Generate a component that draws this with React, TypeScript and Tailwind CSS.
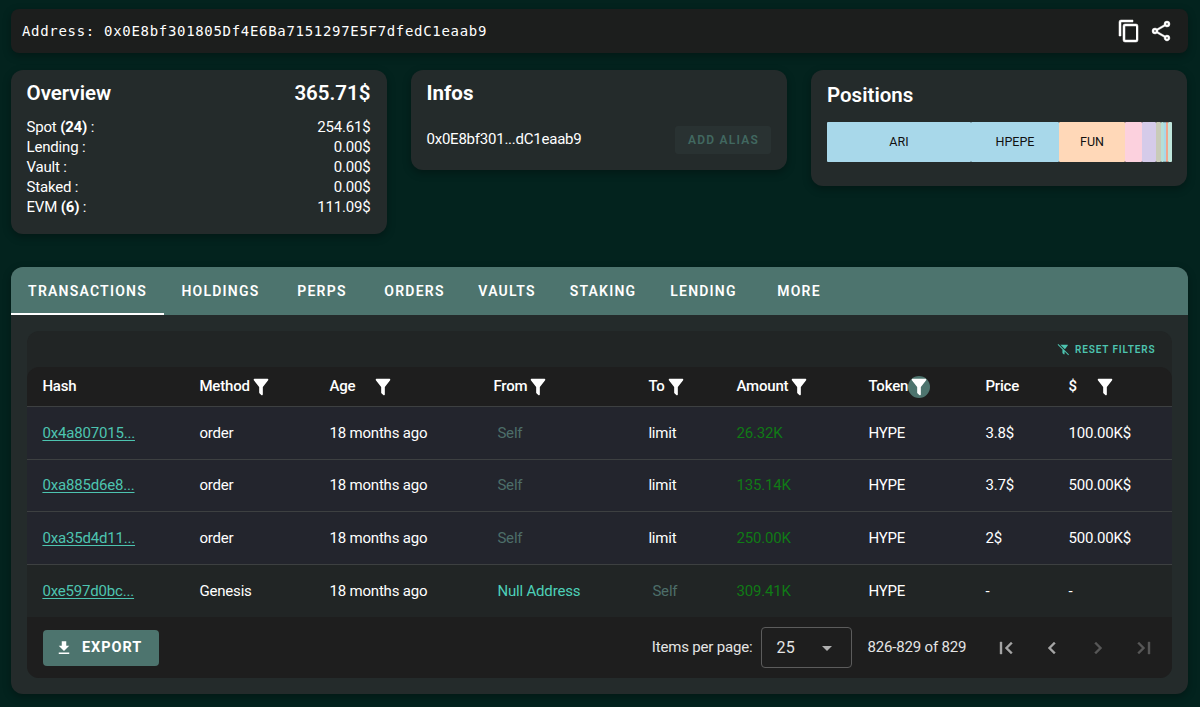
import React from "react";

const FILTER =
  "M14,12V19.88C14.04,20.18 13.94,20.5 13.71,20.71C13.32,21.1 12.69,21.1 12.3,20.71L10.29,18.7C10.06,18.47 9.96,18.16 10,17.87V12H9.97L4.21,4.62C3.87,4.19 3.95,3.56 4.38,3.22C4.57,3.08 4.78,3 5,3V3H19V3C19.22,3 19.43,3.08 19.62,3.22C20.05,3.56 20.13,4.19 19.79,4.62L14.03,12H14Z";
const FILTER_OFF =
  "M2.39,1.73L1.11,3L10,11.89V17.87C9.96,18.16 10.06,18.47 10.29,18.7L12.3,20.71C12.69,21.1 13.32,21.1 13.71,20.71C13.94,20.5 14.04,20.18 14,19.88V15.89L20.84,22.73L22.11,21.46L2.39,1.73M19.79,4.62C20.13,4.19 20.05,3.56 19.62,3.22C19.43,3.08 19.22,3 19,3H6.2L14.6,11.4L19.79,4.62Z";
const COPY =
  "M19,21H8V7H19M19,5H8A2,2 0 0,0 6,7V21A2,2 0 0,0 8,23H19A2,2 0 0,0 21,21V7A2,2 0 0,0 19,5M16,1H4A2,2 0 0,0 2,3V17H4V3H16V1Z";
const SHARE =
  "M18,16.08C17.24,16.08 16.56,16.38 16.04,16.85L8.91,12.7C8.96,12.47 9,12.24 9,12C9,11.76 8.96,11.53 8.91,11.3L15.96,7.19C16.5,7.69 17.21,8 18,8A3,3 0 0,0 21,5A3,3 0 0,0 18,2A3,3 0 0,0 15,5C15,5.24 15.04,5.47 15.09,5.7L8.04,9.81C7.5,9.31 6.79,9 6,9A3,3 0 0,0 3,12A3,3 0 0,0 6,15C6.79,15 7.5,14.69 8.04,14.19L15.16,18.34C15.11,18.55 15.08,18.77 15.08,19C15.08,20.61 16.39,21.91 18,21.91C19.61,21.91 20.92,20.61 20.92,19A2.92,2.92 0 0,0 18,16.08M18,4A1,1 0 0,1 19,5A1,1 0 0,1 18,6A1,1 0 0,1 17,5A1,1 0 0,1 18,4M6,13A1,1 0 0,1 5,12A1,1 0 0,1 6,11A1,1 0 0,1 7,12A1,1 0 0,1 6,13M18,20A1,1 0 0,1 17,19A1,1 0 0,1 18,18A1,1 0 0,1 19,19A1,1 0 0,1 18,20Z";
const DOWNLOAD = "M5,20H19V18H5M19,9H15V3H9V9H5L12,16L19,9Z";
const FIRST =
  "M18.41,16.59L13.82,12L18.41,7.41L17,6L11,12L17,18L18.41,16.59M6,6H8V18H6V6Z";
const PREV = "M15.41,16.58L10.83,12L15.41,7.41L14,6L8,12L14,18L15.41,16.58Z";
const NEXT = "M8.59,16.58L13.17,12L8.59,7.41L10,6L16,12L10,18L8.59,16.58Z";
const LAST =
  "M5.59,7.41L10.18,12L5.59,16.59L7,18L13,12L7,6L5.59,7.41M16,6H18V18H16V6Z";
const DOWN = "M7,10L12,15L17,10H7Z";

function Icon({ d, className }: { d: string; className: string }) {
  return (
    <svg viewBox="0 0 24 24" fill="currentColor" className={"shrink-0 " + className}>
      <path d={d} />
    </svg>
  );
}

const overview: [string, string, string][] = [
  ["Spot ", "(24)", "254.61$"],
  ["Lending", "", "0.00$"],
  ["Vault", "", "0.00$"],
  ["Staked", "", "0.00$"],
  ["EVM ", "(6)", "111.09$"],
];

const segments = [
  { label: "ARI", cls: "w-[144px] bg-[#a8d8ea]" },
  { label: "HPEPE", cls: "w-[88px] bg-[#a8d8ea]" },
  { label: "FUN", cls: "w-[66px] bg-[#ffd8b8]" },
  { label: "", cls: "w-[17px] bg-[#fcd1de]" },
  { label: "", cls: "w-[14px] bg-[#d5cbe9]" },
  { label: "", cls: "w-[5px] bg-[#c9cbb8]" },
  { label: "", cls: "w-[3px] bg-[#b5dfd8]" },
  { label: "", cls: "w-[2px] bg-[#a8d8ea]" },
  { label: "", cls: "w-[2px] bg-[#f0a58c]" },
  { label: "", cls: "w-[4px] bg-[#bfe6dc]" },
];

const tabs = [
  { label: "TRANSACTIONS", cls: "w-[153px] border-b-2 border-white pt-[2px]" },
  { label: "HOLDINGS", cls: "w-[113px]" },
  { label: "PERPS", cls: "w-[90px]" },
  { label: "ORDERS", cls: "w-[95px]" },
  { label: "VAULTS", cls: "w-[90px]" },
  { label: "STAKING", cls: "w-[102px]" },
  { label: "LENDING", cls: "w-[99px]" },
  { label: "MORE", cls: "w-[92px]" },
];

const heads = [
  { label: "Hash", filter: false, cls: "pb-px" },
  { label: "Method", filter: true, cls: "" },
  { label: "Age", filter: true, cls: "gap-[17px]" },
  { label: "From", filter: true, cls: "" },
  { label: "To", filter: true, cls: "" },
  { label: "Amount", filter: true, cls: "" },
  { label: "Token", filter: true, cls: "" },
  { label: "Price", filter: false, cls: "" },
  { label: "$", filter: true, cls: "gap-[17px]" },
];

const rows = [
  ["0x4a807015...", "order", "Self", "limit", "26.32K", "3.8$", "100.00K$"],
  ["0xa885d6e8...", "order", "Self", "limit", "135.14K", "3.7$", "500.00K$"],
  ["0xa35d4d11...", "order", "Self", "limit", "250.00K", "2$", "500.00K$"],
  ["0xe597d0bc...", "Genesis", "Null Address", "Self", "309.41K", "-", "-"],
];

const grid =
  "grid grid-cols-[157px_130px_164px_155px_88px_132px_117px_83px_1fr] items-center pl-[15.4px]";
const card = "rounded-xl bg-[#242b2b] shadow-[0_3px_8px_rgba(0,0,0,0.3)]";

export default function App() {
  return (
    <div className="h-[707px] w-[1200px] overflow-hidden bg-[#03231e] pl-[11px] pr-[12.5px] pt-[9px] font-['Roboto',sans-serif] text-[15px] tracking-[-0.18px] text-white">
      <header className="flex h-[44px] items-center rounded-lg bg-[#1c1e1d] pl-[11px] pr-[15px] shadow-[0_3px_8px_rgba(0,0,0,0.3)]">
        <span className="font-['DejaVu_Sans_Mono',monospace] text-[14px] tracking-[0.69px]">
          Address: 0x0E8bf301805Df4E6Ba7151297E5F7dfedC1eaab9
        </span>
        <Icon d={COPY} className="ml-auto size-6 stroke-white stroke-[0.5]" />
        <Icon d={SHARE} className="ml-2 size-6 stroke-white stroke-[0.4]" />
      </header>

      <div className="mt-[17px] flex items-start gap-6">
        <section className={"h-[164px] w-[376px] pl-[15.5px] pr-[16.5px] pt-[11px] " + card}>
          <div className="flex h-6 items-center justify-between text-[20.5px] font-semibold tracking-normal">
            <h2>Overview</h2>
            <span>365.71$</span>
          </div>
          <div className="mt-[12px]">
            {overview.map(([a, b, v]) => (
              <div key={a} className="flex h-5 items-center justify-between">
                <span className="whitespace-pre">
                  {a}
                  <b>{b}</b> :
                </span>
                <span>{v}</span>
              </div>
            ))}
          </div>
        </section>

        <section className={"h-[100px] w-[376px] pl-[15.5px] pr-4 pt-[11px] " + card}>
          <h2 className="h-6 text-[20.5px] leading-6 font-bold tracking-normal">Infos</h2>
          <div className="mt-[21px] flex h-7 items-center justify-between">
            <span className="pb-0.5 tracking-[-0.23px]">0x0E8bf301...dC1eaab9</span>
            <button className="h-7 w-24 rounded-[3px] bg-[#293232] pl-px text-[12px] font-semibold tracking-[1.2px] text-[#416860]">
              ADD ALIAS
            </button>
          </div>
        </section>

        <section className={"h-[116px] w-[376px] px-4 pt-[13px] " + card}>
          <h2 className="h-6 text-[20.5px] leading-6 font-semibold tracking-normal">Positions</h2>
          <div className="mt-[15px] flex h-10 w-[345px] text-[12.5px] tracking-normal text-[#111]">
            {segments.map((s, i) => (
              <div key={i} className={"flex items-center justify-center rounded-[1px] " + s.cls}>
                {s.label}
              </div>
            ))}
          </div>
        </section>
      </div>

      <main className={"mt-[33px] h-[427px] overflow-hidden " + card}>
        <nav className="flex h-12 bg-[#4d746e] text-[14px] font-semibold tracking-[1.22px]">
          {tabs.map((t) => (
            <button key={t.label} className={"flex items-center justify-center " + t.cls}>
              {t.label}
            </button>
          ))}
        </nav>

        <div className="mx-4 mt-4 h-[347px] overflow-hidden rounded-xl bg-[#212525]">
          <div className="flex h-9 items-center justify-end gap-[5px] pr-[16px] text-[10px] font-semibold tracking-[0.88px] text-[#4dc4b0]">
            <Icon d={FILTER_OFF} className="size-[13px]" />
            RESET FILTERS
          </div>

          <div className={"h-[39px] rounded-t-xl bg-[#1e1e1e] font-medium " + grid}>
            {heads.map((h) => (
              <div key={h.label} className={"flex items-center " + h.cls}>
                {h.label}
                {h.filter && (
                  <span
                    className={
                      "flex size-[22px] items-center justify-center rounded-full " +
                      (h.label === "Token" ? "bg-[#4d746e]" : "")
                    }
                  >
                    <Icon d={FILTER} className="size-[22px]" />
                  </span>
                )}
              </div>
            ))}
          </div>

          {rows.map((r, i) => (
            <div
              key={r[0]}
              className={
                "border-t border-[#3d4041] " +
                (i < 3 ? "h-[52.5px] bg-[#23252d] " : "h-[53.5px] ") +
                grid
              }
            >
              <a className="text-[#4dc4b0] underline underline-offset-2">{r[0]}</a>
              <span>{r[1]}</span>
              <span>18 months ago</span>
              <span className={"pl-1 " + (i === 3 ? "text-[#4dd0b8]" : "text-[#4d6e69]")}>{r[2]}</span>
              <span className={i === 3 ? "pl-1 text-[#4d6e69]" : ""}>{r[3]}</span>
              <span className="text-[#107a16]">{r[4]}</span>
              <span>HYPE</span>
              <span>{r[5]}</span>
              <span>{r[6]}</span>
            </div>
          ))}

          <footer className="flex h-[61px] items-center bg-[#1e1e1e] pl-4 pr-4 text-[#e4e4e4]">
            <button className="flex h-9 w-[116px] items-center rounded-[4px] bg-[#4d746e] pl-3 text-[14.5px] font-bold tracking-[0.95px] text-white">
              <Icon d={DOWNLOAD} className="mr-[9px] size-[18px]" />
              EXPORT
            </button>
            <span className="ml-auto">Items per page:</span>
            <div className="ml-2 flex h-[41px] w-[91px] items-center justify-between rounded-[4px] border border-[#5c5c5c] pr-3 pl-[15px] text-[16px] tracking-[0.2px]">
              25
              <Icon d={DOWN} className="size-6 text-[#b0b0b0]" />
            </div>
            <span className="ml-4 w-[126px]">826-829 of 829</span>
            <div className="flex gap-[22px] text-[#a5a5a5]">
              <Icon d={FIRST} className="size-6 stroke-current stroke-[0.4]" />
              <Icon d={PREV} className="size-6 stroke-current stroke-[0.4]" />
              <Icon d={NEXT} className="size-6 stroke-current stroke-[0.4] text-[#575757]" />
              <Icon d={LAST} className="size-6 stroke-current stroke-[0.4] text-[#575757]" />
            </div>
          </footer>
        </div>
      </main>
    </div>
  );
}
